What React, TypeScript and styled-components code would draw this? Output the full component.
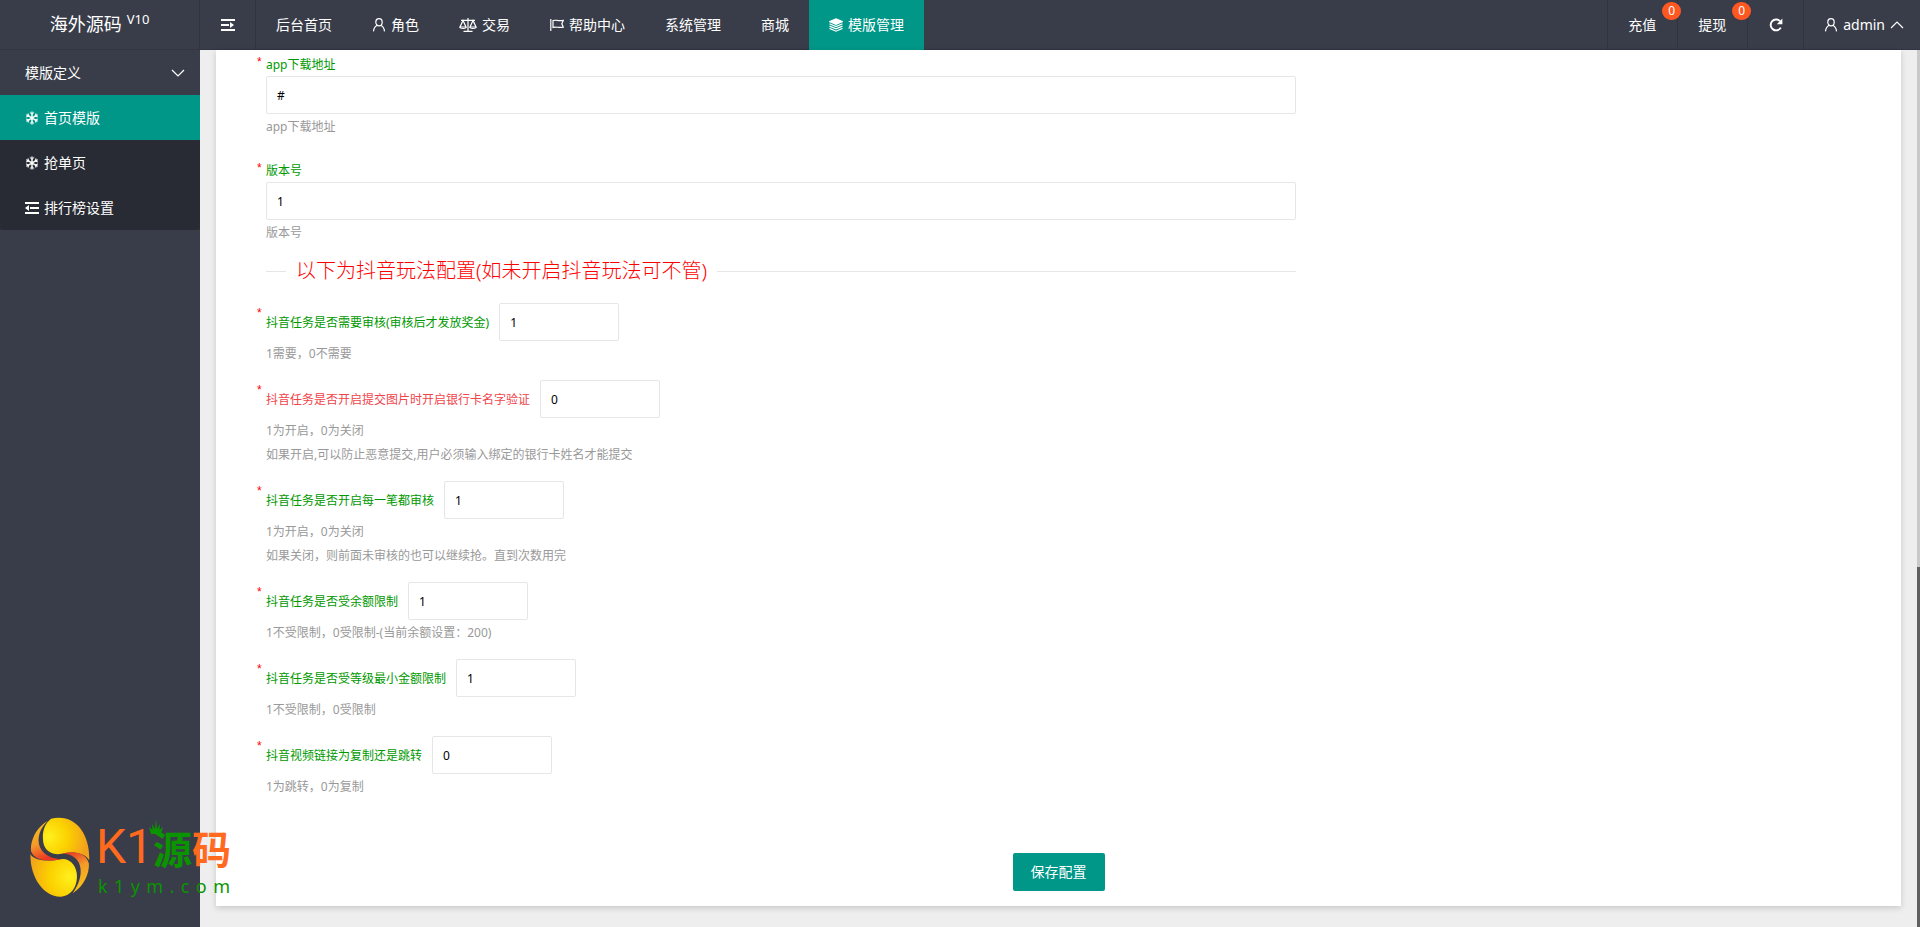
import React from "react";
import styled, { createGlobalStyle } from "styled-components";

const GlobalStyle = createGlobalStyle`
  *, *::before, *::after { box-sizing: border-box; }
  body {
    margin: 0;
    background: #eee;
    font: 14px/24px "Noto Sans", "Noto Sans CJK SC", sans-serif;
    color: #333;
  }
  a { color: inherit; text-decoration: none; }
  input, button { font-family: inherit; }
`;

const Page = styled.div`
  position: relative;
  display: flex;
  flex-direction: column;
  min-height: 100vh;
`;

const Header = styled.header`
  display: flex;
  height: 50px;
  background: #393d49;
  color: #fff;
  box-shadow: inset 0 -1px 0 #32353f;
`;

const Brand = styled.h1`
  display: flex;
  justify-content: center;
  gap: 5px;
  width: 200px;
  margin: 0;
  padding-top: 12px;
  border-right: 1px solid #31343e;
  font-size: 18px;
  font-weight: 400;
`;

const Version = styled.sup`
  font-size: 13px;
  line-height: 14px;
`;

const IconCell = styled.button`
  display: flex;
  align-items: center;
  justify-content: center;
  width: 56px;
  padding: 0;
  border: 0;
  border-right: 1px solid #31343e;
  background: none;
  color: #fff;
`;

const TopNav = styled.nav`
  display: flex;
  flex: 1;
`;

const NavLink = styled.a<{ $active?: boolean }>`
  display: flex;
  align-items: center;
  gap: 5px;
  padding: 0 20px;
  background: ${(p) => (p.$active ? "#009688" : "transparent")};
`;

const Tools = styled.div`
  display: flex;
  border-left: 1px solid #31343e;
`;

const ToolLink = styled.a`
  position: relative;
  display: flex;
  align-items: center;
  width: 70px;
  padding: 0 20px;
  border-right: 1px solid #31343e;
`;

const Badge = styled.span`
  position: absolute;
  top: 2px;
  right: -4px;
  z-index: 1;
  width: 19px;
  height: 18px;
  border-radius: 9px;
  background: #ff5722;
  font-size: 12px;
  line-height: 18px;
  text-align: center;
`;

const UserMenu = styled.a`
  display: flex;
  align-items: center;
  gap: 5px;
  padding: 0 16px 0 20px;
`;

const Body = styled.div`
  display: flex;
  flex: 1;
`;

const Sidebar = styled.aside`
  width: 200px;
  background: #393d49;
  color: #fff;
`;

const GroupTitle = styled.a`
  display: flex;
  align-items: center;
  justify-content: space-between;
  height: 45px;
  padding: 0 15px 0 25px;
`;

const SubMenu = styled.nav`
  background: #282b33;
  border-radius: 0 0 2px 2px;
`;

const SubLink = styled.a<{ $active?: boolean }>`
  display: flex;
  align-items: center;
  gap: 5px;
  height: 45px;
  padding-left: 25px;
  background: ${(p) => (p.$active ? "#009688" : "transparent")};
`;

const Main = styled.main`
  flex: 1;
  padding: 0 16px 21px;
`;

const Card = styled.form`
  padding: 2px 50px 15px;
  background: #fff;
  box-shadow: 0 2px 6px rgba(0, 0, 0, 0.16);
`;

const Fields = styled.div<{ $gap: number }>`
  display: flex;
  flex-direction: column;
  gap: ${(p) => p.$gap}px;
  max-width: 1030px;
`;

const Field = styled.div`
  position: relative;
`;

const Star = styled.span`
  position: absolute;
  top: 0;
  left: -9px;
  color: #f00;
  font: 12px/20px "Liberation Sans", sans-serif;
`;

const Label = styled.label<{ $warn?: boolean }>`
  display: block;
  padding-top: 2px;
  color: ${(p) => (p.$warn ? "#f0444a" : "#090")};
  font-size: 12px;
  line-height: 22px;
`;

const InlineRow = styled.div`
  display: flex;
  align-items: center;
  gap: 10px;
`;

const TextBox = styled.input<{ $short?: boolean }>`
  display: block;
  width: ${(p) => (p.$short ? "120px" : "100%")};
  height: 38px;
  padding: 0 10px;
  border: 1px solid #e6e6e6;
  border-radius: 2px;
  background: #fff;
  color: #000;
  font-size: 12px;
`;

const Hint = styled.p`
  margin: 0;
  padding-top: 2px;
  color: #999;
  font-size: 12px;
  line-height: 22px;
`;

const Section = styled.h2`
  display: flex;
  align-items: center;
  gap: 10px;
  max-width: 1030px;
  margin: 12px 0 17px;
  color: #f00;
  font-size: 20px;
  font-weight: 300;
  line-height: 30px;

  &::before, &::after {
    content: "";
    height: 1px;
    background: #e6e6e6;
  }
  &::before { width: 20px; }
  &::after { flex: 1; }
`;

const Actions = styled.div`
  display: flex;
  justify-content: center;
  padding-top: 55px;
`;

const SaveButton = styled.button`
  height: 38px;
  padding: 0 18px 2px;
  border: 0;
  border-radius: 2px;
  background: #009688;
  color: #fff;
  font-size: 14px;
`;

const Track = styled.div`
  display: flex;
  flex-direction: column;
  justify-content: flex-end;
  width: 3px;
  background: #c9c9c9;
`;

const Thumb = styled.div`
  height: 41%;
  background: #606060;
`;

const Watermark = styled.div`
  position: absolute;
  left: 30px;
  bottom: 30px;
  display: flex;
  align-items: flex-start;
  gap: 6px;
  pointer-events: none;
`;

const WordMark = styled.div`
  width: 134px;
`;

const WordTop = styled.div`
  position: relative;
  display: flex;
  align-items: center;
  justify-content: space-between;
  height: 60px;
`;

const Latin = styled.span`
  color: #ff6a1f;
  font: 400 48px/60px Roboto, sans-serif;
`;

const Han = styled.span<{ $green?: boolean }>`
  color: ${(p) => (p.$green ? "#0a9400" : "#ff6a1f")};
  font: 700 39px/58px "Noto Sans CJK SC", sans-serif;
`;

const Crown = styled.svg`
  position: absolute;
  top: 2px;
  left: 52px;
`;

const Domain = styled.div`
  display: flex;
  justify-content: space-between;
  padding-left: 2px;
  color: #0a9400;
  font-size: 18px;
  line-height: 18px;
`;

const Stroke = ({ w = 14, h = 14, children }: { w?: number; h?: number; children: React.ReactNode }) => (
  <svg width={w} height={h} viewBox={`0 0 ${w} ${h}`} fill="none" stroke="currentColor" strokeWidth="1.2" aria-hidden="true">
    {children}
  </svg>
);

const UserIcon = () => (
  <Stroke>
    <ellipse cx="7" cy="4.2" rx="3.2" ry="3.6" />
    <path d="M5.1 7.2C2.9 8.4 1.7 10.4 1.5 13.4M8.9 7.2C11.1 8.4 12.3 10.4 12.5 13.4" />
  </Stroke>
);

const ScaleIcon = () => (
  <Stroke w={18} h={14}>
    <path d="M9 0v13M4.5 13.3h9M2 2.4h14M4 2.5L1 9h6zM14 2.5L11 9h6z" />
    <path d="M.8 9c.4 2 6 2 6.4 0M10.8 9c.4 2 6 2 6.4 0" />
  </Stroke>
);

const FlagIcon = () => (
  <Stroke>
    <path d="M.8 1v12M3 2.6c3-1.2 4.5.8 10.3-.2l-1.5 3.4 1.5 3.4c-5 1-7-1-10.3.2z" />
  </Stroke>
);

const LayersIcon = () => (
  <Stroke>
    <path d="M7 .8l6.5 2.8L7 6.4.5 3.6z" fill="currentColor" />
    <path d="M.5 5.8L7 8.6l6.5-2.8M.5 8.1l6.5 2.8 6.5-2.8M.5 10.4l6.5 2.8 6.500-2.8" />
  </Stroke>
);

const IndentIcon = ({ left }: { left?: boolean }) => (
  <Stroke>
    <path d="M0 2h14M0 12h14" strokeWidth="2" />
    {left ? (
      <>
        <path d="M5 7h9" strokeWidth="2" />
        <path d="M0 7l4-3v6z" fill="currentColor" stroke="none" />
      </>
    ) : (
      <>
        <path d="M0 7h8" strokeWidth="2" />
        <path d="M13 7L9 4v6z" fill="currentColor" stroke="none" />
      </>
    )}
  </Stroke>
);

const SnowIcon = () => (
  <Stroke>
    <path d="M7 .5v13M1.4 3.7l11.2 6.6M1.4 10.3l11.2-6.6" strokeWidth="1.4" />
    <path
      d="M4.8 1.3L7 3.4l2.2-2.1M4.8 12.7L7 10.6l2.2 2.1M1 6l2.7-.8-.6-2.8M13 6l-2.700-.8.6-2.8M1 8l2.7.8-.6 2.8M13 8l-2.7.8.6 2.8"
      strokeWidth="1"
    />
  </Stroke>
);

const RefreshIcon = () => (
  <Stroke>
    <path d="M11.8 9.6A5.4 5.4 0 1 1 11 3.2" strokeWidth="1.9" />
    <path d="M13.4.6v5.6H7.8z" fill="currentColor" stroke="none" />
  </Stroke>
);

const Chevron = ({ up }: { up?: boolean }) => (
  <Stroke h={10}>
    <path d={up ? "M1 8l6-6 6 6" : "M1 2l6 6 6-6"} />
  </Stroke>
);

const Emblem = () => (
  <svg width="60" height="80" viewBox="89 110 180 241" aria-hidden="true">
    <defs>
      <radialGradient id="goldTop" gradientUnits="userSpaceOnUse" cx="146" cy="170" r="115">
        <stop offset="0" stopColor="#fff01c" />
        <stop offset="0.5" stopColor="#fbd000" />
        <stop offset="1" stopColor="#f3a11c" />
      </radialGradient>
      <radialGradient id="goldBottom" gradientUnits="userSpaceOnUse" cx="208" cy="290" r="125">
        <stop offset="0" stopColor="#fff01c" />
        <stop offset="0.5" stopColor="#fbd000" />
        <stop offset="1" stopColor="#f3a11c" />
      </radialGradient>
      <linearGradient id="ribbonLeft" x1="0" y1="0" x2="0.3" y2="1">
        <stop offset="0" stopColor="#f8c814" />
        <stop offset="0.6" stopColor="#f39a2a" />
        <stop offset="1" stopColor="#ea3a24" />
      </linearGradient>
      <linearGradient id="ribbonRight" x1="0.3" y1="0" x2="0.6" y2="1">
        <stop offset="0" stopColor="#ea3a24" />
        <stop offset="0.4" stopColor="#f39a2a" />
        <stop offset="1" stopColor="#f8c814" />
      </linearGradient>
    </defs>
    <path fill="url(#goldTop)" d="M152 115C127 135 125 165 129 188C134 213 158 226 184 221C215 214 250 215 267 240C270 165 228 98 152 115Z" />
    <path fill="url(#goldBottom)" d="M90 222C105 245 150 243 182 237C212 233 232 262 230 292C229 322 212 347 182 350C130 352 88 290 90 222Z" />
    <path fill="url(#ribbonLeft)" d="M143 121C102 143 88 190 92 214C104 243 145 245 182 237C135 236 110 205 115 172C118 150 128 135 143 121Z" />
    <path fill="url(#ribbonRight)" d="M266 250C256 213 215 214 184 221C226 219 245 250 241 282C238 306 228 325 217 340C252 317 268 280 266 250Z" />
  </svg>
);

type Item = { id: string; label: string; value: string; hints: string[]; warn?: boolean };

const wideItems: Item[] = [
  { id: "app-url", label: "app下载地址", value: "#", hints: ["app下载地址"] },
  { id: "version", label: "版本号", value: "1", hints: ["版本号"] },
];

const shortItems: Item[] = [
  { id: "review", label: "抖音任务是否需要审核(审核后才发放奖金)", value: "1", hints: ["1需要，0不需要"] },
  {
    id: "bank-name",
    label: "抖音任务是否开启提交图片时开启银行卡名字验证",
    value: "0",
    warn: true,
    hints: ["1为开启，0为关闭", "如果开启,可以防止恶意提交,用户必须输入绑定的银行卡姓名才能提交"],
  },
  {
    id: "review-each",
    label: "抖音任务是否开启每一笔都审核",
    value: "1",
    hints: ["1为开启，0为关闭", "如果关闭，则前面未审核的也可以继续抢。直到次数用完"],
  },
  { id: "balance", label: "抖音任务是否受余额限制", value: "1", hints: ["1不受限制，0受限制-(当前余额设置：200)"] },
  { id: "level", label: "抖音任务是否受等级最小金额限制", value: "1", hints: ["1不受限制，0受限制"] },
  { id: "link-mode", label: "抖音视频链接为复制还是跳转", value: "0", hints: ["1为跳转，0为复制"] },
];

const navItems: { text: string; icon?: React.ReactNode; active?: boolean }[] = [
  { text: "后台首页" },
  { text: "角色", icon: <UserIcon /> },
  { text: "交易", icon: <ScaleIcon /> },
  { text: "帮助中心", icon: <FlagIcon /> },
  { text: "系统管理" },
  { text: "商城" },
  { text: "模版管理", icon: <LayersIcon />, active: true },
];

export default function App() {
  return (
    <Page>
      <GlobalStyle />
      <Header>
        <Brand>
          海外源码<Version>V10</Version>
        </Brand>
        <IconCell type="button" aria-label="折叠菜单">
          <IndentIcon />
        </IconCell>
        <TopNav>
          {navItems.map((n) => (
            <NavLink key={n.text} href="#" $active={n.active}>
              {n.icon}
              {n.text}
            </NavLink>
          ))}
        </TopNav>
        <Tools>
          <ToolLink href="#">
            充值<Badge>0</Badge>
          </ToolLink>
          <ToolLink href="#">
            提现<Badge>0</Badge>
          </ToolLink>
          <IconCell type="button" aria-label="刷新">
            <RefreshIcon />
          </IconCell>
          <UserMenu href="#">
            <UserIcon />
            admin
            <Chevron up />
          </UserMenu>
        </Tools>
      </Header>

      <Body>
        <Sidebar>
          <GroupTitle href="#">
            模版定义
            <Chevron />
          </GroupTitle>
          <SubMenu>
            <SubLink href="#" $active>
              <SnowIcon />
              首页模版
            </SubLink>
            <SubLink href="#">
              <SnowIcon />
              抢单页
            </SubLink>
            <SubLink href="#">
              <IndentIcon left />
              排行榜设置
            </SubLink>
          </SubMenu>
        </Sidebar>

        <Main>
          <Card onSubmit={(e) => e.preventDefault()}>
            <Fields $gap={20}>
              {wideItems.map((f) => (
                <Field key={f.id}>
                  <Star>*</Star>
                  <Label htmlFor={f.id}>{f.label}</Label>
                  <TextBox id={f.id} defaultValue={f.value} />
                  {f.hints.map((h) => (
                    <Hint key={h}>{h}</Hint>
                  ))}
                </Field>
              ))}
            </Fields>
            <Section>以下为抖音玩法配置(如未开启抖音玩法可不管)</Section>
            <Fields $gap={15}>
              {shortItems.map((f) => (
                <Field key={f.id}>
                  <Star>*</Star>
                  <InlineRow>
                    <Label htmlFor={f.id} $warn={f.warn}>
                      {f.label}
                    </Label>
                    <TextBox id={f.id} defaultValue={f.value} $short />
                  </InlineRow>
                  {f.hints.map((h) => (
                    <Hint key={h}>{h}</Hint>
                  ))}
                </Field>
              ))}
            </Fields>
            <Actions>
              <SaveButton type="submit">保存配置</SaveButton>
            </Actions>
          </Card>
        </Main>
        <Track>
          <Thumb />
        </Track>
      </Body>

      <Watermark>
        <Emblem />
        <WordMark>
          <WordTop>
            <Latin>K1</Latin>
            <Han $green>源</Han>
            <Han>码</Han>
            <Crown width="16" height="16" viewBox="0 0 16 16" fill="#0a9400" aria-hidden="true">
              <path d="M3 15L1 8l3.5 3L4 5l3 5L8 0l1 10 3-5-.5 6L15 8l-2 7z" />
            </Crown>
          </WordTop>
          <Domain>
            {"k1ym.com".split("").map((c, i) => (
              <span key={i}>{c}</span>
            ))}
          </Domain>
        </WordMark>
      </Watermark>
    </Page>
  );
}
